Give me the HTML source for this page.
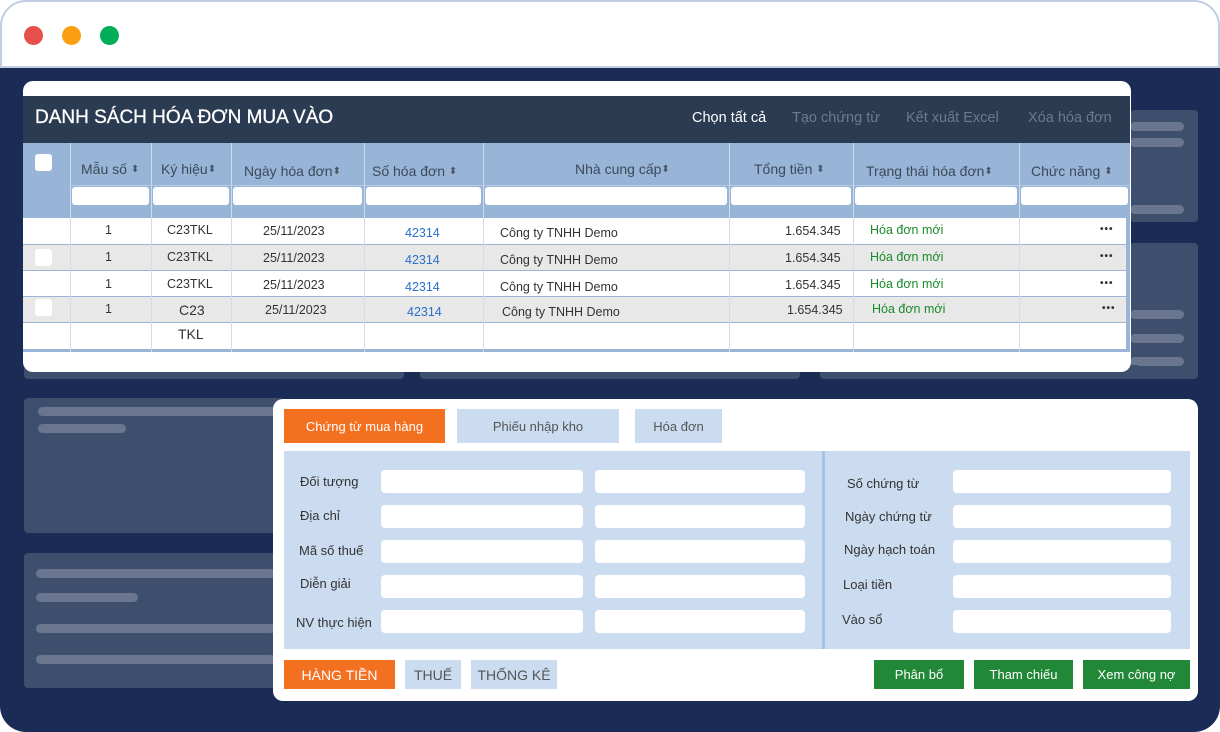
<!DOCTYPE html>
<html><head><meta charset="utf-8"><style>
*{margin:0;padding:0;box-sizing:border-box}
body{width:1220px;height:732px;background:#fff;font-family:"Liberation Sans","DejaVu Sans",sans-serif;position:relative;overflow:hidden}
.a{position:absolute}
.top{left:0;top:0;width:1220px;height:80px;border:2px solid #c0cde3;border-radius:26px 26px 0 0;background:#fff}
.nav{left:0;top:66px;width:1220px;height:666px;background:#1a2c55;border-radius:0 0 26px 26px;border-top:2px solid #c0cde3}
.dot{width:19px;height:19px;border-radius:50%;top:26px}
.ph{background:#3e4f6e;border-radius:4px}
.bar{background:#6a7690;border-radius:5px;height:9px}
.card{background:#fff;border-radius:10px}
.th{font-size:14px;color:#3c4a5c;top:161px;white-space:nowrap}
.th i{font-style:normal;font-size:10px;color:#4a5668;vertical-align:2px}
.fi{background:#fff;border-radius:3px;height:18px;top:187px}
.vl{width:1px;background:#cfdcec}
.cell{font-size:12.5px;color:#333;white-space:nowrap}
.dots{font-size:10px;color:#333;letter-spacing:1px;font-weight:bold}
.inp{background:#fff;border-radius:4px;height:23px}
.lb{font-size:13px;color:#333;white-space:nowrap}
.btn{font-size:13px;display:flex;align-items:center;justify-content:center;color:#fff}
</style></head><body>
<div class="a top"></div>
<div class="a dot" style="left:24px;background:#e5504a"></div>
<div class="a dot" style="left:62px;background:#fb9f11"></div>
<div class="a dot" style="left:100px;background:#02ad57"></div>
<div class="a nav"></div>

<div class="a ph" style="left:1130px;top:110px;width:68px;height:112px"></div>
<div class="a bar" style="left:1130px;top:122px;width:54px"></div>
<div class="a bar" style="left:1130px;top:138px;width:54px"></div>
<div class="a bar" style="left:1130px;top:205px;width:54px"></div>
<div class="a ph" style="left:1130px;top:243px;width:68px;height:136px"></div>
<div class="a bar" style="left:1130px;top:310px;width:54px"></div>
<div class="a bar" style="left:1130px;top:334px;width:54px"></div>
<div class="a bar" style="left:1130px;top:357px;width:54px"></div>
<div class="a ph" style="left:420px;top:365px;width:380px;height:14px"></div>
<div class="a ph" style="left:820px;top:365px;width:320px;height:14px"></div>
<div class="a ph" style="left:24px;top:365px;width:380px;height:14px"></div>

<div class="a ph" style="left:24px;top:398px;width:260px;height:135px"></div>
<div class="a bar" style="left:38px;top:407px;width:240px"></div>
<div class="a bar" style="left:38px;top:424px;width:88px"></div>
<div class="a ph" style="left:24px;top:553px;width:260px;height:135px"></div>
<div class="a bar" style="left:36px;top:569px;width:240px"></div>
<div class="a bar" style="left:36px;top:593px;width:102px"></div>
<div class="a bar" style="left:36px;top:624px;width:240px"></div>
<div class="a bar" style="left:36px;top:655px;width:240px"></div>

<!-- table card -->
<div class="a card" style="left:23px;top:81px;width:1108px;height:291px"></div>
<div class="a" style="left:23px;top:96px;width:1107px;height:47px;background:#2b3b52"></div>
<div class="a" style="left:35px;top:107px;font-size:19px;color:#fff;-webkit-text-stroke:0.3px #fff">DANH SÁCH HÓA ĐƠN MUA VÀO</div>
<div class="a" style="left:692px;top:110px;font-size:14.5px;color:#fff">Chọn tất cả</div>
<div class="a" style="left:792px;top:110px;font-size:14.5px;color:#6b7a8e">Tạo chứng từ</div>
<div class="a" style="left:906px;top:110px;font-size:14.5px;color:#6b7a8e">Kết xuất Excel</div>
<div class="a" style="left:1028px;top:110px;font-size:14.5px;color:#6b7a8e">Xóa hóa đơn</div>
<div class="a" style="left:23px;top:143px;width:1107px;height:209px;background:#98b4d6"></div>
<div class="a" style="left:35px;top:154px;width:17px;height:17px;background:#fff;border-radius:3px"></div>

<div class="a" style="left:23px;top:218px;width:1103px;height:26px;background:#fff"></div>
<div class="a" style="left:23px;top:245px;width:1103px;height:25px;background:#e8e8e8"></div>
<div class="a" style="left:23px;top:271px;width:1103px;height:25px;background:#fff"></div>
<div class="a" style="left:23px;top:297px;width:1103px;height:25px;background:#e8e8e8"></div>
<div class="a" style="left:23px;top:323px;width:1103px;height:26px;background:#fff"></div>
<div class="a" style="left:35px;top:249px;width:17px;height:17px;background:#fff;border-radius:3px"></div>
<div class="a" style="left:35px;top:299px;width:17px;height:17px;background:#fff;border-radius:3px"></div>

<div class="a vl" style="left:70px;top:143px;height:209px"></div>
<div class="a vl" style="left:151px;top:143px;height:209px"></div>
<div class="a vl" style="left:231px;top:143px;height:209px"></div>
<div class="a vl" style="left:364px;top:143px;height:209px"></div>
<div class="a vl" style="left:483px;top:143px;height:209px"></div>
<div class="a vl" style="left:729px;top:143px;height:209px"></div>
<div class="a vl" style="left:853px;top:143px;height:209px"></div>
<div class="a vl" style="left:1019px;top:143px;height:209px"></div>
<div class="a" style="left:70px;top:185px;width:1060px;height:1px;background:#b8cce4"></div>

<div class="a th" style="left:81px">Mẫu số <i>⬍</i></div>
<div class="a th" style="left:161px">Ký hiệu<i>⬍</i></div>
<div class="a th" style="left:244px;top:163px">Ngày hóa đơn<i>⬍</i></div>
<div class="a th" style="left:372px;top:163px">Số hóa đơn <i>⬍</i></div>
<div class="a th" style="left:575px">Nhà cung cấp<i>⬍</i></div>
<div class="a th" style="left:754px">Tổng tiền <i>⬍</i></div>
<div class="a th" style="left:866px;top:163px">Trạng thái hóa đơn<i>⬍</i></div>
<div class="a th" style="left:1031px;top:163px">Chức năng <i>⬍</i></div>

<div class="a fi" style="left:72px;width:77px"></div>
<div class="a fi" style="left:153px;width:76px"></div>
<div class="a fi" style="left:233px;width:129px"></div>
<div class="a fi" style="left:366px;width:115px"></div>
<div class="a fi" style="left:485px;width:242px"></div>
<div class="a fi" style="left:731px;width:120px"></div>
<div class="a fi" style="left:855px;width:162px"></div>
<div class="a fi" style="left:1021px;width:107px"></div>

<!-- rows -->
<div class="a cell" style="left:105px;top:223px">1</div><div class="a cell" style="left:167px;top:223px">C23TKL</div><div class="a cell" style="left:263px;top:224px">25/11/2023</div><div class="a cell" style="left:405px;top:226px;color:#2a6fc9">42314</div><div class="a cell" style="left:500px;top:226px">Công ty TNHH Demo</div><div class="a cell" style="left:785px;top:224px">1.654.345</div><div class="a cell" style="left:870px;top:223px;color:#1a8a2a">Hóa đơn mới</div><div class="a dots" style="left:1100px;top:224px">•••</div>
<div class="a cell" style="left:105px;top:250px">1</div><div class="a cell" style="left:167px;top:250px">C23TKL</div><div class="a cell" style="left:263px;top:251px">25/11/2023</div><div class="a cell" style="left:405px;top:253px;color:#2a6fc9">42314</div><div class="a cell" style="left:500px;top:253px">Công ty TNHH Demo</div><div class="a cell" style="left:785px;top:251px">1.654.345</div><div class="a cell" style="left:870px;top:250px;color:#1a8a2a">Hóa đơn mới</div><div class="a dots" style="left:1100px;top:251px">•••</div>
<div class="a cell" style="left:105px;top:277px">1</div><div class="a cell" style="left:167px;top:277px">C23TKL</div><div class="a cell" style="left:263px;top:278px">25/11/2023</div><div class="a cell" style="left:405px;top:280px;color:#2a6fc9">42314</div><div class="a cell" style="left:500px;top:280px">Công ty TNHH Demo</div><div class="a cell" style="left:785px;top:278px">1.654.345</div><div class="a cell" style="left:870px;top:277px;color:#1a8a2a">Hóa đơn mới</div><div class="a dots" style="left:1100px;top:278px">•••</div>
<div class="a cell" style="left:105px;top:302px">1</div><div class="a cell" style="left:179px;top:302px;font-size:14px">C23</div><div class="a cell" style="left:265px;top:303px">25/11/2023</div><div class="a cell" style="left:407px;top:305px;color:#2a6fc9">42314</div><div class="a cell" style="left:502px;top:305px">Công ty TNHH Demo</div><div class="a cell" style="left:787px;top:303px">1.654.345</div><div class="a cell" style="left:872px;top:302px;color:#1a8a2a">Hóa đơn mới</div><div class="a dots" style="left:1102px;top:303px">•••</div>
<div class="a cell" style="left:178px;top:326px;font-size:14px">TKL</div>

<!-- form card -->
<div class="a card" style="left:273px;top:399px;width:925px;height:302px"></div>
<div class="a btn" style="left:284px;top:409px;width:161px;height:34px;background:#f37021">Chứng từ mua hàng</div>
<div class="a btn" style="left:457px;top:409px;width:162px;height:34px;background:#cbdcf0;color:#555">Phiếu nhập kho</div>
<div class="a btn" style="left:635px;top:409px;width:87px;height:34px;background:#cbdcf0;color:#555">Hóa đơn</div>
<div class="a" style="left:284px;top:451px;width:906px;height:198px;background:#cbdcf0"></div>
<div class="a" style="left:822px;top:451px;width:3px;height:198px;background:#a8c2e2"></div>

<div class="a lb" style="left:300px;top:474px">Đối tượng</div>
<div class="a lb" style="left:300px;top:508px">Địa chỉ</div>
<div class="a lb" style="left:299px;top:543px">Mã số thuế</div>
<div class="a lb" style="left:300px;top:576px">Diễn giải</div>
<div class="a lb" style="left:296px;top:615px">NV thực hiện</div>
<div class="a inp" style="left:381px;top:470px;width:202px"></div><div class="a inp" style="left:595px;top:470px;width:210px"></div>
<div class="a inp" style="left:381px;top:505px;width:202px"></div><div class="a inp" style="left:595px;top:505px;width:210px"></div>
<div class="a inp" style="left:381px;top:540px;width:202px"></div><div class="a inp" style="left:595px;top:540px;width:210px"></div>
<div class="a inp" style="left:381px;top:575px;width:202px"></div><div class="a inp" style="left:595px;top:575px;width:210px"></div>
<div class="a inp" style="left:381px;top:610px;width:202px"></div><div class="a inp" style="left:595px;top:610px;width:210px"></div>

<div class="a lb" style="left:847px;top:476px">Số chứng từ</div>
<div class="a lb" style="left:845px;top:509px">Ngày chứng từ</div>
<div class="a lb" style="left:844px;top:542px">Ngày hạch toán</div>
<div class="a lb" style="left:843px;top:577px">Loại tiền</div>
<div class="a lb" style="left:842px;top:612px">Vào sổ</div>
<div class="a inp" style="left:953px;top:470px;width:218px"></div>
<div class="a inp" style="left:953px;top:505px;width:218px"></div>
<div class="a inp" style="left:953px;top:540px;width:218px"></div>
<div class="a inp" style="left:953px;top:575px;width:218px"></div>
<div class="a inp" style="left:953px;top:610px;width:218px"></div>

<div class="a btn" style="left:284px;top:660px;width:111px;height:29px;background:#f37021;font-size:14px">HÀNG TIỀN</div>
<div class="a btn" style="left:405px;top:660px;width:56px;height:29px;background:#cbdcf0;color:#555;font-size:14px">THUẾ</div>
<div class="a btn" style="left:471px;top:660px;width:86px;height:29px;background:#cbdcf0;color:#555;font-size:14px">THỐNG KÊ</div>
<div class="a btn" style="left:874px;top:660px;width:90px;height:29px;background:#218838">Phân bổ</div>
<div class="a btn" style="left:974px;top:660px;width:99px;height:29px;background:#218838">Tham chiếu</div>
<div class="a btn" style="left:1083px;top:660px;width:107px;height:29px;background:#218838">Xem công nợ</div>
</body></html>
